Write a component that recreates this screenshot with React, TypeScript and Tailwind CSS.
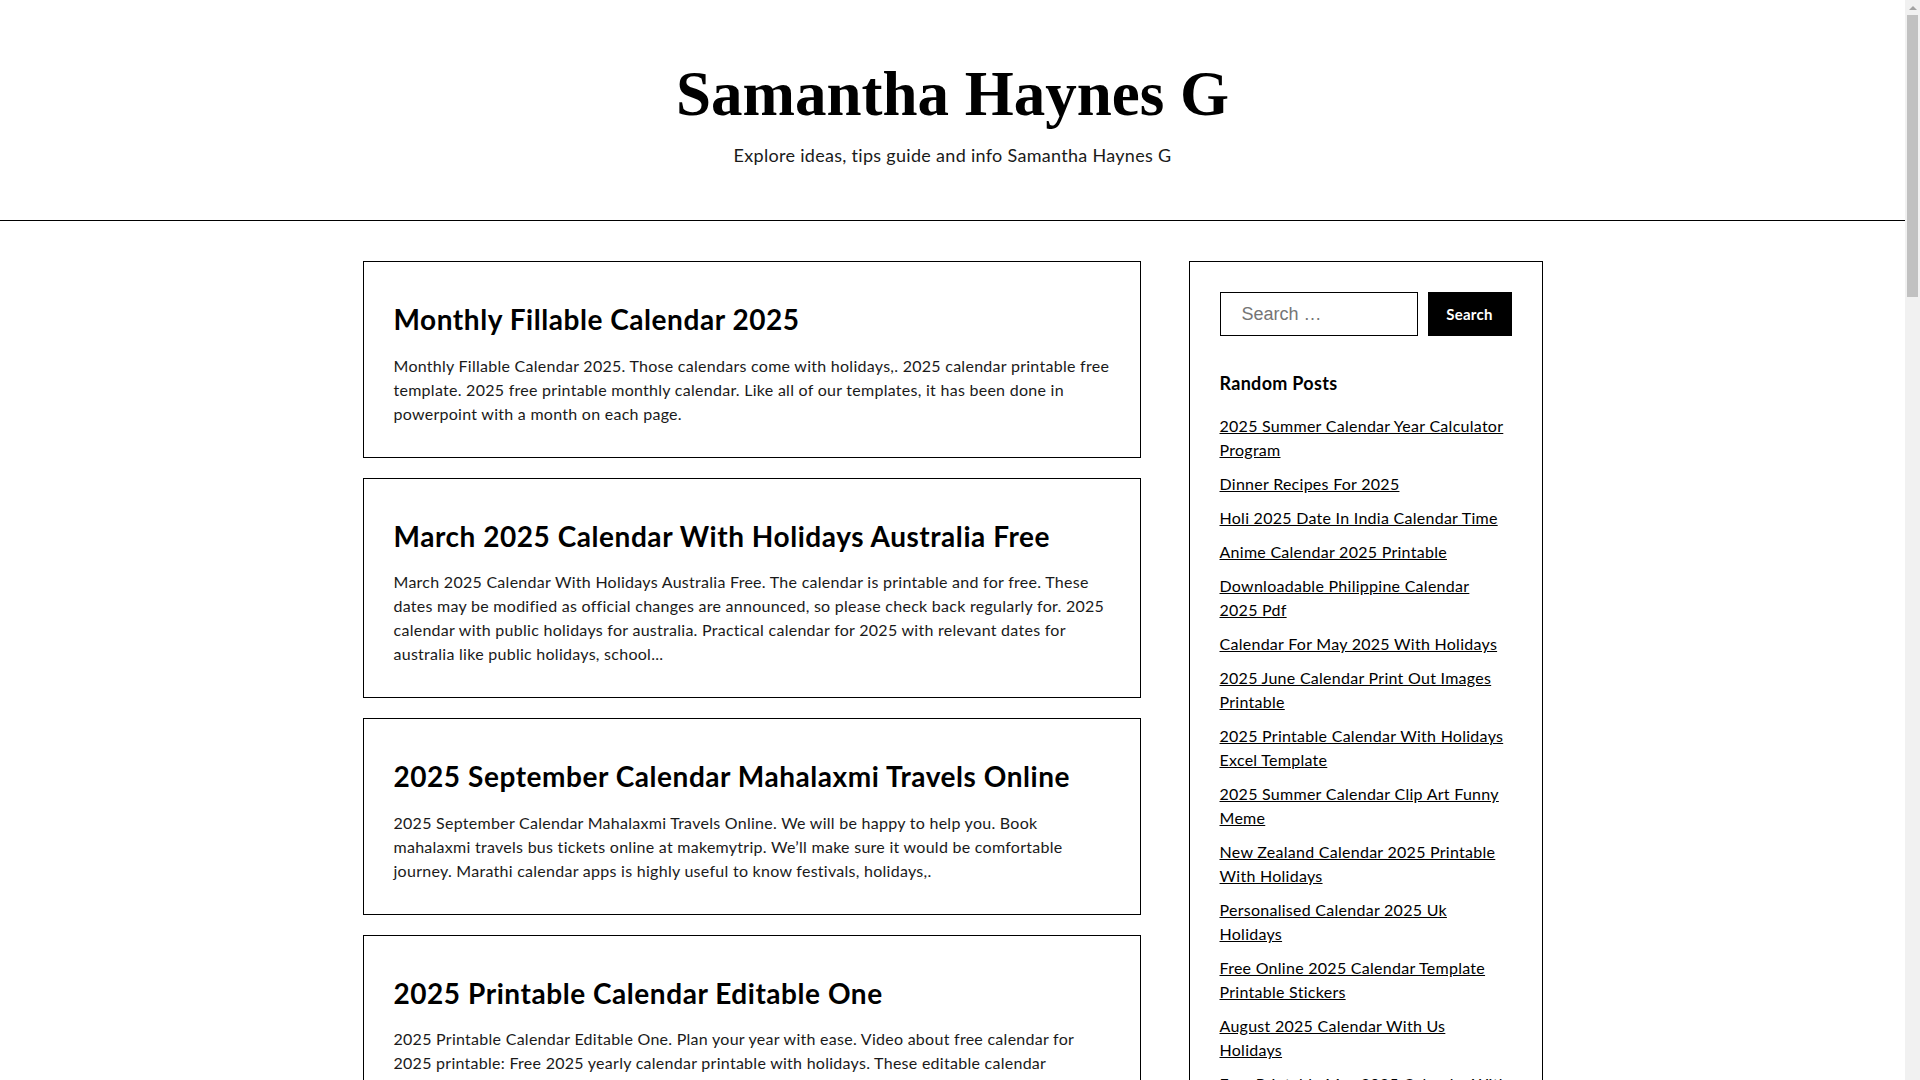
import React from "react";

type Post = { title: string; excerpt: string };

const posts: Post[] = [
  {
    title: "Monthly Fillable Calendar 2025",
    excerpt:
      "Monthly Fillable Calendar 2025. Those calendars come with holidays,. 2025 calendar printable free template. 2025 free printable monthly calendar. Like all of our templates, it has been done in powerpoint with a month on each page.",
  },
  {
    title: "March 2025 Calendar With Holidays Australia Free",
    excerpt:
      "March 2025 Calendar With Holidays Australia Free. The calendar is printable and for free. These dates may be modified as official changes are announced, so please check back regularly for. 2025 calendar with public holidays for australia. Practical calendar for 2025 with relevant dates for australia like public holidays, school...",
  },
  {
    title: "2025 September Calendar Mahalaxmi Travels Online",
    excerpt:
      "2025 September Calendar Mahalaxmi Travels Online. We will be happy to help you. Book mahalaxmi travels bus tickets online at makemytrip. We\u2019ll make sure it would be comfortable journey. Marathi calendar apps is highly useful to know festivals, holidays,.",
  },
  {
    title: "2025 Printable Calendar Editable One",
    excerpt:
      "2025 Printable Calendar Editable One. Plan your year with ease. Video about free calendar for 2025 printable: Free 2025 yearly calendar printable with holidays. These editable calendar templates can be customized in word, excel and pdf formats.",
  },
  {
    title: "Free Printable May 2025 Calendar With Holidays",
    excerpt:
      "Free Printable May 2025 Calendar With Holidays. Download a free printable calendar for may 2025 with holidays. All calendars are blank and editable, perfect for planning your month.",
  },
];

const randomPosts = [
  "2025 Summer Calendar Year Calculator Program",
  "Dinner Recipes For 2025",
  "Holi 2025 Date In India Calendar Time",
  "Anime Calendar 2025 Printable",
  "Downloadable Philippine Calendar 2025 Pdf",
  "Calendar For May 2025 With Holidays",
  "2025 June Calendar Print Out Images Printable",
  "2025 Printable Calendar With Holidays Excel Template",
  "2025 Summer Calendar Clip Art Funny Meme",
  "New Zealand Calendar 2025 Printable With Holidays",
  "Personalised Calendar 2025 Uk Holidays",
  "Free Online 2025 Calendar Template Printable Stickers",
  "August 2025 Calendar With Us Holidays",
  "Free Printable May 2025 Calendar With Holidays",
];

// classic window scrollbar, drawn over the right gutter
function Scrollbar() {
  return (
    <div className="fixed top-0 right-0 flex h-screen w-[15px] flex-col items-center bg-[#f1f1f1]">
      <div className="mt-[6px] h-0 w-0 border-x-[4px] border-b-[4px] border-x-transparent border-b-[#a3a3a3]" />
      <div className="mt-[5px] h-[282px] w-[11px] bg-[#c1c1c1]" />
    </div>
  );
}

export default function App() {
  return (
    <div className="min-h-screen bg-white pr-[15px] text-black font-['Lato',sans-serif] tracking-[0.27px]">
      <header className="border-b border-black pt-[63px] pb-[51px] text-center">
        <h1 className="font-['Liberation_Serif',serif] text-[63px] font-bold leading-none tracking-normal">
          Samantha Haynes G
        </h1>
        <p className="mt-[16px] text-[18px] leading-[27px] tracking-[0.3px] text-[#1a1a1a]">
          Explore ideas, tips guide and info Samantha Haynes G
        </p>
      </header>

      <div className="mx-auto mt-10 flex w-[1180px] items-start gap-12 pb-10">
        <main className="flex w-[778px] flex-col gap-5">
          {posts.map((p) => (
            <article key={p.title} className="border border-black px-[30px] pt-[41px] pb-[31px]">
              <h2 className="mb-[17px] text-[28px] font-bold leading-[1.2] tracking-[0.55px]">
                <a href="#">{p.title}</a>
              </h2>
              <p className="text-[16px] leading-6 text-[#1a1a1a]">{p.excerpt}</p>
            </article>
          ))}
        </main>

        <aside className="w-[354px] border border-black p-[30px]">
          <form className="flex gap-[10px]" onSubmit={(e) => e.preventDefault()}>
            <input
              type="search"
              placeholder="Search …"
              className="h-11 w-[198px] border border-black px-[21px] font-['Liberation_Sans',sans-serif] text-[18px] tracking-normal outline-none placeholder:text-[#757575]"
            />
            <button className="h-11 w-[84px] bg-black text-[15px] font-bold text-white">Search</button>
          </form>

          <h3 className="mt-[37px] text-[18px] font-bold leading-[1.2] tracking-[0.3px]">Random Posts</h3>
          <ul className="mt-[19px] flex flex-col gap-[10px]">
            {randomPosts.map((t) => (
              <li key={t} className="text-[16px] leading-6">
                <a href="#" className="underline">
                  {t}
                </a>
              </li>
            ))}
          </ul>
        </aside>
      </div>

      <Scrollbar />
    </div>
  );
}
